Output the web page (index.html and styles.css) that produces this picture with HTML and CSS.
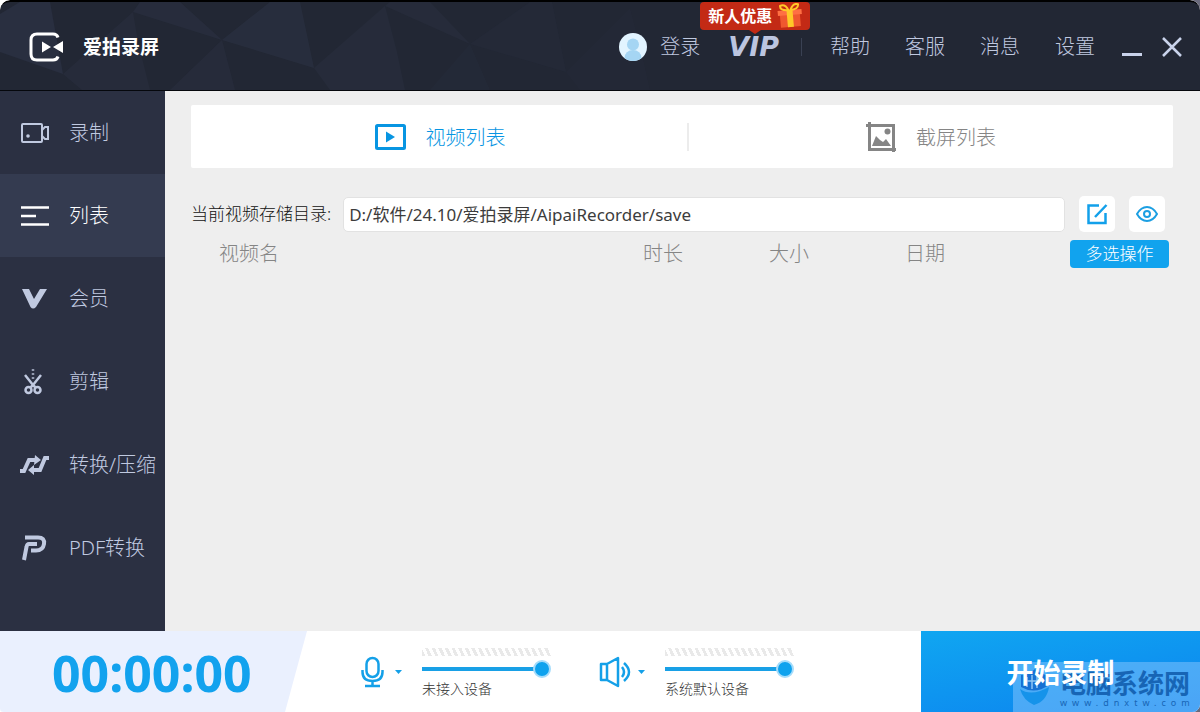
FILE: index.html
```html
<!DOCTYPE html>
<html lang="zh-CN">
<head>
<meta charset="utf-8">
<meta name="viewport" content="width=device-width, initial-scale=1">
<title>爱拍录屏</title>
<link rel="stylesheet" href="styles.css">
</head>
<body>
<div class="app">
  <header class="header">
    <svg class="header-pattern" viewBox="0 0 1200 88" preserveAspectRatio="xMinYMid slice" aria-hidden="true">
      <g fill="#292f40">
        <path d="M0 12L20 0H50L63 72 0 50Z"/>
        <path d="M133 10L222 38 180 0H140Z" opacity=".7"/>
        <path d="M63 72L133 10 138 40 150 88H82Z" opacity=".6"/>
        <path d="M222 38L270 0H300L314 66Z" opacity=".8"/>
        <path d="M222 38L170 88H235Z" opacity=".6"/>
        <path d="M314 66L385 4 397 50 405 88H330Z" opacity=".5"/>
        <path d="M385 4L470 42 430 0H390Z" opacity=".5"/>
        <path d="M470 42L530 0H552L566 70Z" opacity=".35"/>
        <path d="M470 42L430 88H490Z" opacity=".3"/>
        <path d="M566 70L630 6 642 52 650 88H580Z" opacity=".2"/>
      </g>
    </svg>
    <div class="brand">
      <svg class="logo" width="36" height="30" viewBox="0 0 36 30" aria-hidden="true">
        <path d="M29 5.500Q28 2 24 2H8Q2 2 2 8V22Q2 28 8 28H24Q28 28 29 24.500" fill="none" stroke="#fff" stroke-width="3"/>
        <path d="M13 9.500L22 15 13 20.500ZM34 9V21L24 15Z" fill="#fff"/>
      </svg>
      <h1 class="brand-name">爱拍录屏</h1>
    </div>
    <nav class="topnav" aria-label="账户与帮助">
      <button class="top-link login" type="button">
        <svg width="28" height="28" viewBox="0 0 28 28" aria-hidden="true">
          <defs><clipPath id="avatar"><circle cx="14" cy="14" r="14"/></clipPath></defs>
          <circle cx="14" cy="14" r="14" fill="#e2f4ff"/>
          <g clip-path="url(#avatar)" fill="#a5d5f3"><circle cx="14" cy="11.500" r="6"/><ellipse cx="14" cy="25" rx="8.500" ry="8"/></g>
        </svg>
        <span>登录</span>
      </button>
      <div class="vip-box">
        <button class="vip" type="button">VIP</button>
        <div class="promo">
          <span>新人优惠</span>
          <svg width="26" height="26" viewBox="0 0 26 26" aria-hidden="true">
            <g transform="rotate(-5 13 13)">
              <path d="M3 11H23V24H3Z" fill="#f0582f"/><path d="M1 7H25V12H1Z" fill="#ff7043"/>
              <path d="M10 7H16V24H10Z" fill="#ffc928"/>
              <path d="M12 7Q3 7 4 2Q9 0 12 7ZM14 7Q22 7 22 2Q17 0 14 7Z" fill="none" stroke="#ffc928" stroke-width="2"/>
            </g>
          </svg>
        </div>
      </div>
      <span class="sep"></span>
      <button class="top-link" type="button">帮助</button>
      <button class="top-link" type="button">客服</button>
      <button class="top-link" type="button">消息</button>
      <button class="top-link" type="button">设置</button>
      <div class="window-controls">
        <button class="win" type="button" aria-label="最小化"><svg width="20" height="20" viewBox="0 0 20 20"><path d="M0 17.500H20" stroke="#c9d2ea" stroke-width="3"/></svg></button>
        <button class="win" type="button" aria-label="关闭"><svg width="20" height="20" viewBox="0 0 20 20"><path d="M1 1L19 19M19 1L1 19" stroke="#c9d2ea" stroke-width="2.500"/></svg></button>
      </div>
    </nav>
  </header>

  <div class="body">
    <nav class="sidebar" aria-label="主菜单">
      <a class="side-item" href="#record">
        <svg width="30" height="26" viewBox="0 0 30 26" fill="none" stroke="currentColor" stroke-width="2" aria-hidden="true"><rect x="2" y="4" width="20" height="18" rx="1"/><path d="M22 10L25 7H28V19H25L22 16"/><circle cx="8" cy="16" r="1.800" fill="currentColor" stroke="none"/></svg>
        <span>录制</span>
      </a>
      <a class="side-item active" href="#list" aria-current="page">
        <svg width="30" height="26" viewBox="0 0 30 26" fill="none" stroke="currentColor" stroke-width="2.500" aria-hidden="true"><path d="M1 4.500H29M1 13H16M1 21.500H29"/></svg>
        <span>列表</span>
      </a>
      <a class="side-item" href="#member">
        <svg width="30" height="26" viewBox="0 0 30 26" fill="currentColor" aria-hidden="true"><path d="M2 3H9L14 13 20 3H27L16 21Q13 24 10.500 21Z"/></svg>
        <span>会员</span>
      </a>
      <a class="side-item" href="#edit">
        <svg width="30" height="26" viewBox="0 0 30 26" fill="none" stroke="currentColor" stroke-width="2.500" aria-hidden="true"><path d="M5 6L13 16 21 6M13 16L10 19M13 16L16 19"/><circle cx="8.500" cy="21" r="3"/><circle cx="17.500" cy="21" r="3"/><path d="M13 0V10" stroke-dasharray="2 2" opacity=".7"/></svg>
        <span>剪辑</span>
      </a>
      <a class="side-item" href="#convert">
        <svg width="30" height="26" viewBox="0 0 30 26" fill="none" stroke="currentColor" stroke-width="4" aria-hidden="true"><path d="M0 19H4L9 8H17M11 18H20L25 6H29"/><path d="M15 3L21 8 14 13ZM14 13L8 18 14 23Z" fill="currentColor" stroke="none"/></svg>
        <span>转换/压缩</span>
      </a>
      <a class="side-item" href="#pdf">
        <svg width="30" height="26" viewBox="0 0 30 26" fill="none" stroke="currentColor" stroke-width="4" aria-hidden="true"><path d="M5 2.500H18Q25 2.500 24 9Q23 15.500 16 15.500H11"/><path d="M17 9H9Q7 9 6.500 12L4 25"/></svg>
        <span>PDF转换</span>
      </a>
    </nav>

    <main class="content">
      <div class="tabs" role="tablist">
        <button class="tab selected" type="button" role="tab" aria-selected="true">
          <svg width="31" height="26" viewBox="0 0 31 26" aria-hidden="true"><rect x="1.500" y="1.500" width="28" height="23" rx="1" fill="none" stroke="currentColor" stroke-width="3"/><path d="M11 7.500L20 13 11 18.500Z" fill="currentColor"/></svg>
          <span>视频列表</span>
        </button>
        <button class="tab" type="button" role="tab" aria-selected="false">
          <svg width="30" height="30" viewBox="0 0 30 30" aria-hidden="true"><path d="M3.500 0V27.500H30M0 3.500H27.500V30" fill="none" stroke="currentColor" stroke-width="3"/><path d="M6 24L10 14 14 18 17 20 20 17 25 24Z" fill="currentColor"/><circle cx="21.500" cy="9.500" r="3" fill="currentColor"/></svg>
          <span>截屏列表</span>
        </button>
      </div>
      <div class="path-row">
        <label for="save-path">当前视频存储目录:</label>
        <input id="save-path" class="path" type="text" value="D:/软件/24.10/爱拍录屏/AipaiRecorder/save">
        <button class="tool" type="button" aria-label="更改目录"><svg width="22" height="22" viewBox="0 0 22 22" fill="none" stroke="#12a0ea" stroke-width="2.500"><path d="M13 2.500H2.500V20H19.500V10M9 14L20.500 2"/></svg></button>
        <button class="tool" type="button" aria-label="查看目录"><svg width="24" height="18" viewBox="0 0 24 18" fill="none" stroke="#1c9fe2" stroke-width="2"><path d="M2 9Q6 2 12 2T22 9Q18 16 12 16T2 9Z"/><circle cx="12" cy="9" r="3"/></svg></button>
      </div>
      <table class="videos">
        <colgroup><col><col class="col-duration"><col class="col-size"><col class="col-date"><col class="col-action"></colgroup>
        <thead>
          <tr>
            <th class="name" scope="col">视频名</th>
            <th scope="col">时长</th>
            <th scope="col">大小</th>
            <th scope="col">日期</th>
            <td><button class="multi" type="button">多选操作</button></td>
          </tr>
        </thead>
      </table>
    </main>
  </div>

  <footer class="footer">
    <div class="timer">00:00:00</div>
    <div class="devices">
      <div class="device">
        <button class="device-button" type="button" aria-label="麦克风">
          <svg width="32" height="34" viewBox="0 0 32 34" fill="none" stroke="#14a0e8" stroke-width="2.500" aria-hidden="true"><rect x="10.500" y="3" width="12" height="19" rx="6"/><path d="M6.500 15V17Q6.500 26 16.500 26T26.500 17V15M16.500 26V31M9 31H24"/></svg>
          <svg width="7" height="4" viewBox="0 0 7 4" aria-hidden="true"><path d="M0 0H7L3.500 4Z" fill="#14a0e8"/></svg>
        </button>
        <div class="volume">
          <div class="meter"></div>
          <input class="slider" id="mic" type="range" min="0" max="100" value="100">
          <label for="mic">未接入设备</label>
        </div>
      </div>
      <div class="device">
        <button class="device-button" type="button" aria-label="扬声器">
          <svg width="32" height="34" viewBox="0 0 32 34" fill="none" stroke="#14a0e8" stroke-width="2.500" stroke-linejoin="round" aria-hidden="true"><path d="M2 9H8V25H2ZM8 9L19 3V31L8 25M23 12Q27 17 23 22M25 8Q35 17 25 26"/></svg>
          <svg width="7" height="4" viewBox="0 0 7 4" aria-hidden="true"><path d="M0 0H7L3.500 4Z" fill="#14a0e8"/></svg>
        </button>
        <div class="volume">
          <div class="meter"></div>
          <input class="slider" id="speaker" type="range" min="0" max="100" value="100">
          <label for="speaker">系统默认设备</label>
        </div>
      </div>
    </div>
    <button class="record" type="button"><span class="record-label">开始录制</span></button>
    <div class="watermark">
      <svg width="32" height="40" viewBox="0 0 32 40" aria-hidden="true">
        <path d="M2 8Q10 8 16 2Q22 8 30 8V18Q16 28 2 20Z" fill="#1771d3"/>
        <path d="M1 22Q12 30 30 20Q28 34 15 38Q4 33 1 22Z" fill="#1593ea"/>
        <path d="M8 10V20M13 8V22M18 8V21M8 14H18" stroke="#8ec5f4" stroke-width="1.500" fill="none"/>
      </svg>
      <div class="watermark-text">
        <span class="watermark-name">电脑系统网</span>
        <span class="watermark-url">www.dnxtw.com</span>
      </div>
    </div>
  </footer>
</div>
</body>
</html>
```
FILE: styles.css
```css
* {
  box-sizing: border-box;
}

body {
  margin: 0;
  background: linear-gradient(90deg, #ffffff 50%, #6a6a7c 50%);
  font-family: "Noto Sans", "Noto Sans CJK SC", sans-serif;
  font-size: 20px;
}

button,
input {
  margin: 0;
  padding: 0;
  border: 0;
  background: none;
  color: inherit;
  font: inherit;
}

button {
  cursor: pointer;
}

svg {
  display: block;
  flex: none;
}

.app {
  display: flex;
  flex-direction: column;
  min-height: 100vh;
  overflow: hidden;
  border-radius: 10px 10px 8px 4px;
  background: #eeeeee;
}

/* Header */

.header {
  position: relative;
  display: flex;
  align-items: center;
  justify-content: space-between;
  height: 91px;
  padding: 2px 18px 0 29px;
  border-top: 2px solid #000;
  border-bottom: 1px solid #05070c;
  border-radius: 10px 10px 0 0;
  background: #222734;
}

.header-pattern {
  position: absolute;
  inset: 0;
  width: 100%;
  height: 100%;
}

.brand {
  position: relative;
  display: flex;
  align-items: center;
  gap: 18px;
}

.brand-name {
  margin: 0;
  color: #fff;
  font-size: 19px;
  font-weight: 700;
  line-height: 28px;
}

.topnav {
  position: relative;
  display: flex;
  align-items: center;
  color: #c0c9e0;
  font-weight: 300;
  line-height: 28px;
}

.top-link {
  margin-right: 35px;
  font-weight: 300;
}

.login {
  display: flex;
  align-items: center;
  gap: 13px;
  margin-right: 28px;
}

.vip-box {
  position: relative;
  margin-right: 22px;
}

.vip {
  display: block;
  color: #bcc5e0;
  font-family: "DejaVu Sans", sans-serif;
  font-size: 27px;
  font-style: oblique;
  font-weight: 700;
}

.promo {
  position: absolute;
  left: -28px;
  bottom: 31px;
  display: flex;
  align-items: center;
  gap: 5px;
  height: 28px;
  padding: 0 7px 0 8px;
  border-radius: 4px;
  background: #c32a15;
  color: #fff;
  font-size: 16px;
  font-weight: 700;
  line-height: 24px;
  white-space: nowrap;
}

.promo::after {
  content: "";
  position: absolute;
  left: 49px;
  top: 28px;
  border: 6px solid transparent;
  border-top: 4px solid #c32a15;
  border-bottom: 0;
}

.sep {
  width: 1px;
  height: 18px;
  margin-right: 28px;
  background: #3a4153;
}

.window-controls {
  display: flex;
  gap: 20px;
  margin-left: -8px;
}

/* Body */

.body {
  display: flex;
  flex: 1;
}

.sidebar {
  flex: none;
  width: 165px;
  background: #2b3042;
}

.side-item {
  display: flex;
  align-items: center;
  gap: 19px;
  height: 83px;
  padding-left: 20px;
  color: #c0c9e0;
  font-weight: 300;
  line-height: 28px;
  text-decoration: none;
  white-space: nowrap;
}

.side-item.active {
  background: #343b50;
  color: #fff;
}

.content {
  flex: 1;
  min-width: 0;
  padding: 14px 27px 14px 26px;
}

.tabs {
  display: grid;
  grid-template-columns: 1fr 1fr;
  height: 63px;
  margin-bottom: 28px;
  border-radius: 2px;
  background: #fff;
}

.tab {
  position: relative;
  display: flex;
  align-items: center;
  justify-content: center;
  gap: 20px;
  padding: 1px 0 0 7px;
  color: #858585;
  font-weight: 300;
  line-height: 28px;
}

.tab span {
  padding-top: 2px;
}

.tab.selected {
  color: #0795e2;
}

.tab.selected::after {
  content: "";
  position: absolute;
  right: -7px;
  width: 2px;
  height: 28px;
  background: #ececec;
}

.path-row {
  display: flex;
  align-items: center;
  gap: 14px;
  padding-right: 8px;
  color: #111;
  font-size: 17px;
  font-weight: 300;
  line-height: 24px;
}

.path {
  flex: 1;
  min-width: 0;
  height: 35px;
  margin-left: -2px;
  padding: 0 5px 2px;
  border: 1px solid #e2e2e2;
  border-radius: 5px;
  background: #fff;
  color: #3c3c3c;
  font-weight: 400;
}

.tool {
  display: grid;
  place-items: center;
  width: 36px;
  height: 36px;
  border-radius: 5px;
  background: #fff;
}

.videos {
  width: 100%;
  margin-top: 8px;
  border-collapse: collapse;
  table-layout: fixed;
}

.videos th,
.videos td {
  padding: 0;
  color: #858585;
  font-weight: 300;
  line-height: 28px;
  text-align: left;
}

.videos .name {
  padding-left: 28px;
}

.col-duration {
  width: 126px;
}

.col-size {
  width: 136px;
}

.col-date {
  width: 165px;
}

.col-action {
  width: 103px;
}

.multi {
  display: block;
  width: 99px;
  height: 28px;
  border-radius: 4px;
  background: #11a3ee;
  color: #fff;
  font-size: 17px;
  line-height: 24px;
}

/* Footer */

.footer {
  position: relative;
  display: flex;
  height: 81px;
  background: #fff;
}

.timer {
  flex: none;
  width: 307px;
  padding-left: 52px;
  background: #eaf0fe;
  clip-path: polygon(0 0, 100% 0, 285px 100%, 0 100%);
  color: #12a2ee;
  font-size: 50px;
  font-weight: 700;
  line-height: 84px;
}

.devices {
  display: flex;
  flex: 1;
  gap: 48px;
  padding-left: 49px;
}

.device {
  display: flex;
  gap: 20px;
}

.device-button {
  display: flex;
  align-items: center;
  gap: 7px;
}

.volume {
  display: flex;
  flex-direction: column;
  width: 129px;
  padding-top: 17px;
  color: #333;
  font-size: 14px;
  font-weight: 300;
  line-height: 20px;
}

.meter {
  height: 8px;
  background: repeating-linear-gradient(65deg, #e9e9e9 0 3px, #fff 3px 6px);
}

.slider {
  width: 100%;
  height: 20px;
  margin: 3px 0 0;
  appearance: none;
  outline: 0;
}

.slider::-webkit-slider-runnable-track {
  height: 4px;
  background: linear-gradient(90deg, #18a0e6 120px, transparent 120px);
}

.slider::-webkit-slider-thumb {
  width: 18px;
  height: 18px;
  margin-top: -7px;
  appearance: none;
  border: 2px solid #a5dcfb;
  border-radius: 50%;
  background: #0ea2ee;
}

.record {
  flex: none;
  width: 279px;
  background: linear-gradient(170deg, #10a6f1, #0c84ef);
  color: #fff;
  font-size: 27px;
  font-weight: 700;
}

.record-label {
  position: relative;
  z-index: 2;
}

.watermark {
  position: absolute;
  z-index: 1;
  right: 0;
  bottom: 0;
  display: flex;
  gap: 9px;
  width: 187px;
  height: 50px;
  padding: 5px 0 0 6px;
  background: rgba(150, 205, 255, 0.45);
  pointer-events: none;
}

.watermark-text {
  display: flex;
  flex-direction: column;
  color: #1765b5;
}

.watermark-name {
  font-family: "Noto Sans CJK SC", sans-serif;
  font-size: 26px;
  font-weight: 700;
  line-height: 30px;
}

.watermark-url {
  font-size: 9px;
  letter-spacing: 5px;
  line-height: 12px;
}
```
